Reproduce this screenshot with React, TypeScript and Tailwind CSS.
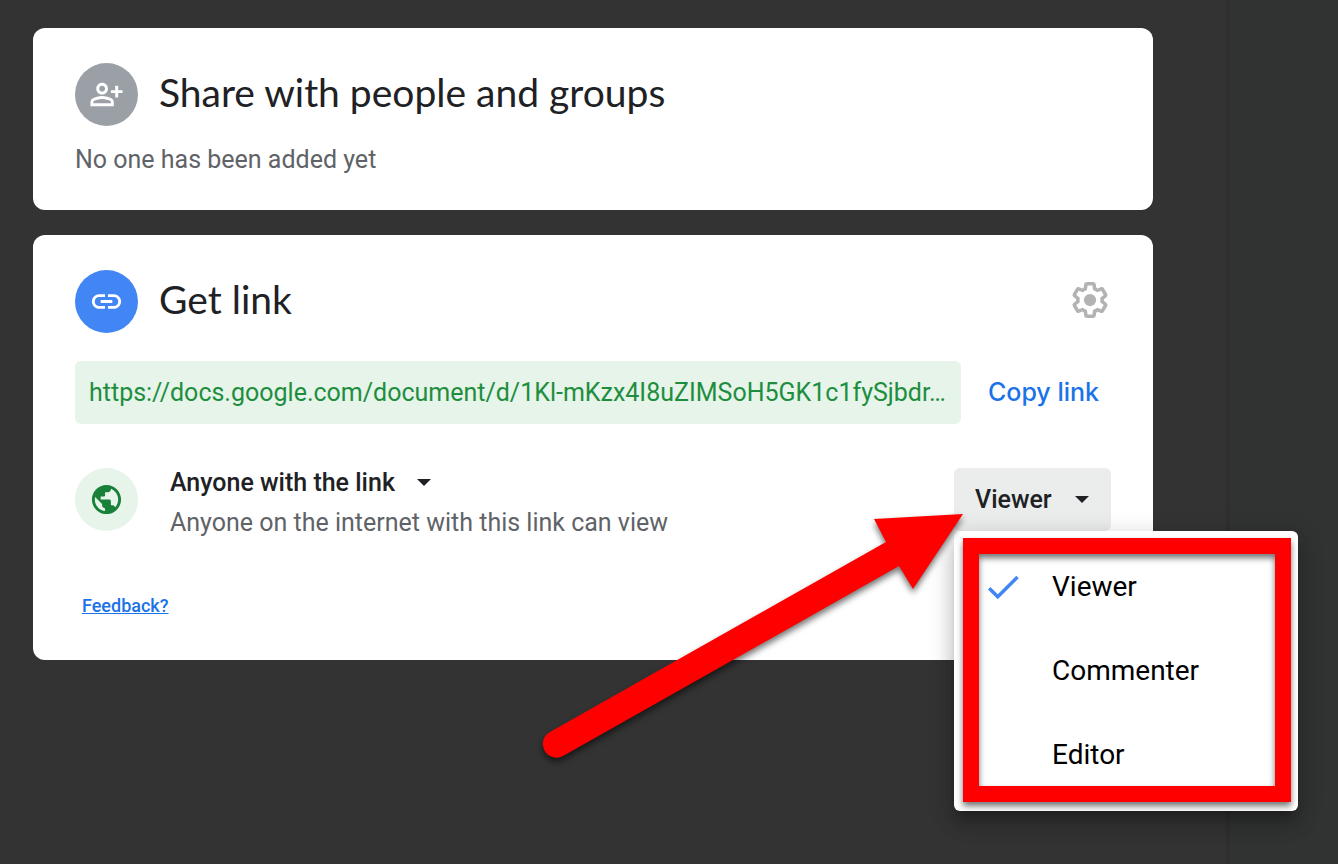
import { useState } from "react";
import { MdDone, MdLink, MdOutlinePersonAddAlt, MdPublic } from "react-icons/md";

const ROLES = ["Viewer", "Commenter", "Editor"];

const Caret = ({ className = "" }: { className?: string }) => (
  <svg
    viewBox="0 0 14 7"
    aria-hidden="true"
    className={`h-[7px] w-3.5 shrink-0 fill-[#202124] ${className}`}
  >
    <path d="M0 0h14L7 7z" />
  </svg>
);

const GearIcon = () => (
  <svg viewBox="0 0 24 24" aria-hidden="true" className="size-[42px] fill-[#b3b3b3]">
    <path d="M13.85 22.25h-3.7c-.74 0-1.36-.54-1.45-1.27l-.27-1.89c-.27-.14-.53-.29-.79-.46l-1.8.72c-.7.26-1.47-.03-1.81-.65L2.2 15.53c-.35-.66-.2-1.44.36-1.88l1.53-1.19c-.01-.15-.02-.3-.02-.46 0-.15.01-.31.02-.46l-1.52-1.19c-.59-.45-.74-1.26-.37-1.88l1.85-3.19c.34-.62 1.11-.9 1.79-.63l1.81.73c.26-.17.52-.32.78-.46l.27-1.91c.09-.7.71-1.25 1.44-1.25h3.7c.74 0 1.36.54 1.45 1.27l.27 1.89c.27.14.53.29.79.46l1.8-.72c.71-.26 1.48.03 1.82.65l1.84 3.18c.36.66.2 1.44-.36 1.88l-1.52 1.19c.01.15.02.3.02.46s-.01.31-.02.46l1.52 1.19c.56.45.72 1.23.37 1.86l-1.86 3.22c-.34.62-1.11.9-1.8.63l-1.8-.72c-.26.17-.52.32-.78.46l-.27 1.91c-.1.68-.72 1.22-1.46 1.22zm-3.23-2h2.76l.37-2.55.53-.22c.44-.18.88-.44 1.34-.78l.45-.34 2.38.96 1.38-2.4-2.03-1.58.07-.56c.03-.26.06-.51.06-.78s-.03-.53-.06-.78l-.07-.56 2.03-1.58-1.39-2.4-2.39.96-.45-.35c-.42-.32-.87-.58-1.33-.77l-.52-.22-.37-2.55h-2.76l-.37 2.55-.53.21c-.44.19-.88.44-1.34.79l-.45.33-2.38-.95-1.39 2.39 2.03 1.58-.07.56a7 7 0 0 0-.06.79c0 .26.02.53.06.78l.07.56-2.03 1.58 1.38 2.4 2.39-.96.45.35c.43.33.86.58 1.33.77l.53.22.38 2.55z" />
    <circle cx="12" cy="12" r="3.5" />
  </svg>
);

// Thick red pointer that ends at the role button
const Arrow = () => (
  <svg
    viewBox="0 0 430 260"
    aria-hidden="true"
    className="pointer-events-none absolute top-[37px] right-[141px] z-20 h-[260px] w-[430px] max-w-none overflow-visible fill-[#ff0000] drop-shadow-[0_4px_3px_rgba(0,0,0,0.55)]"
  >
    <path d="M423 9 334 14l12 23L10 227a13.500 13.500 0 0 0 13 24L359 61l14 23z" />
  </svg>
);

const RolePicker = () => {
  const [open, setOpen] = useState(true);
  const [role, setRole] = useState("Viewer");

  return (
    <div className="relative mt-1 shrink-0">
      <button
        type="button"
        aria-haspopup="menu"
        aria-expanded={open}
        onClick={() => setOpen(!open)}
        className="flex h-[63px] w-[157px] items-center justify-between rounded-md bg-[#ebedec] pr-[22px] pl-[21px] text-[25px] font-medium text-[#202124]"
      >
        {role}
        <Caret />
      </button>

      {open && (
        <div
          role="menu"
          className="absolute top-full left-0 z-10 w-[344px] rounded-md bg-white py-3.5 shadow-[0_9px_9px_-5px_rgba(0,0,0,0.2),0_14px_18px_2px_rgba(0,0,0,0.14),0_5px_25px_4px_rgba(0,0,0,0.12)]"
        >
          {ROLES.map((item) => (
            <button
              key={item}
              type="button"
              role="menuitemradio"
              aria-checked={item === role}
              onClick={() => setRole(item)}
              className="flex h-21 w-full items-center gap-7 pl-7 text-left text-[28px] text-black"
            >
              <span className="size-[42px]">
                {item === role && <MdDone className="size-[42px] text-[#4285f4]" />}
              </span>
              {item}
            </button>
          ))}
          <div className="pointer-events-none absolute top-[7px] right-[7px] bottom-[9px] left-[9px] border-16 border-[#ff0000] drop-shadow-[0_4px_3px_rgba(0,0,0,0.55)]" />
        </div>
      )}

      <Arrow />
    </div>
  );
};

const App = () => {
  return (
    <div className="flex min-h-screen bg-[#333333] font-[Roboto,sans-serif]">
      <main className="flex min-w-0 flex-1 flex-col gap-[25px] pt-7 pr-[73px] pb-10 pl-[33px]">
        <section className="rounded-xl bg-white px-[42px] pt-[35px] pb-8">
          <header className="flex items-center gap-[21px]">
            <span className="flex size-[63px] shrink-0 items-center justify-center rounded-full bg-[#9aa0a6] text-white">
              <MdOutlinePersonAddAlt className="size-[35px]" />
            </span>
            <h1 className="pb-1 font-[Lato,sans-serif] text-[39px] text-[#202124]">
              Share with people and groups
            </h1>
          </header>
          <p className="mt-4 text-[25px] leading-9 text-[#5f6368]">
            No one has been added yet
          </p>
        </section>

        <section className="rounded-xl bg-white px-[42px] pt-[35px] pb-[42px]">
          <header className="flex items-center gap-[21px]">
            <span className="flex size-[63px] shrink-0 items-center justify-center rounded-full bg-[#4285f4] text-white">
              <MdLink className="size-[35px]" />
            </span>
            <h2 className="grow pb-1 font-[Lato,sans-serif] text-[39px] text-[#202124]">
              Get link
            </h2>
            <button type="button" aria-label="Settings" className="pb-1">
              <GearIcon />
            </button>
          </header>

          <div className="mt-7 flex items-center">
            <input
              type="text"
              readOnly
              aria-label="Link"
              value="https://docs.google.com/document/d/1Kl-mKzx4I8uZIMSoH5GK1c1fySjbdr…"
              className="h-[63px] min-w-0 grow rounded-md bg-[#e6f4ea] pr-1 pl-3.5 text-[25px] text-ellipsis text-[#1e8e3e] outline-none"
            />
            <button
              type="button"
              className="h-[63px] w-[150px] shrink-0 pl-[15px] text-center font-[Inter,sans-serif] text-[25px] font-medium text-[#1a73e8]"
            >
              Copy link
            </button>
          </div>

          <div className="mt-10 flex items-start">
            <span className="mt-1 flex size-[63px] shrink-0 items-center justify-center rounded-full bg-[#e6f4ea] text-[#188038]">
              <MdPublic className="size-[35px]" />
            </span>
            <div className="ml-8 min-w-0 grow">
              <div className="relative flex w-fit items-center">
                <select
                  aria-label="Link access"
                  className="h-9 appearance-none bg-transparent pr-9 text-[25px] font-medium text-[#202124] outline-none"
                >
                  <option>Anyone with the link</option>
                </select>
                <Caret className="pointer-events-none absolute right-0" />
              </div>
              <p className="text-[25px] leading-[46px] text-[#5f6368]">
                Anyone on the internet with this link can view
              </p>
            </div>
            <RolePicker />
          </div>

          <a
            href="#feedback"
            className="mt-12 ml-[7px] block w-fit text-lg leading-6 font-medium text-[#1a73e8] underline"
          >
            Feedback?
          </a>
        </section>
      </main>

      <aside className="w-28 shrink-0 border-l-4 border-[#2f2f2f] bg-[#313332]" />
    </div>
  );
};

export default App;
